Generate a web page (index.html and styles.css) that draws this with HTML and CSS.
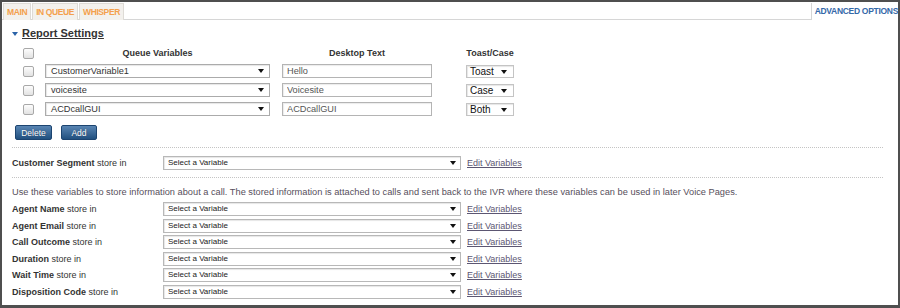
FILE: index.html
```html
<!DOCTYPE html>
<html>
<head>
    <title>Report Settings</title>
    <link rel="stylesheet" href="styles.css">
</head>
<body>
    <div class="panel">
        <div class="tabs">
            <span class="tab">MAIN</span>
            <span class="tab">IN QUEUE</span>
            <span class="tab">WHISPER</span>
            <span class="tab tab-adv">ADVANCED OPTIONS</span>
        </div>

        <div class="content">
            <h2 class="section-title"><span class="caret"></span><span class="title-text">Report Settings</span></h2>

            <div class="qtable">
                <span class="check"></span>
                <div class="qhead">Queue Variables</div>
                <div class="qhead c-text">Desktop Text</div>
                <div class="qhead c-toast">Toast/Case</div>

                <span class="check"></span>
                <div class="select qsel">CustomerVariable1</div>
                <input class="qinput c-text" type="text" value="Hello">
                <div class="select tsel c-toast">Toast</div>

                <span class="check"></span>
                <div class="select qsel">voicesite</div>
                <input class="qinput c-text" type="text" value="Voicesite">
                <div class="select tsel c-toast">Case</div>

                <span class="check"></span>
                <div class="select qsel">ACDcallGUI</div>
                <input class="qinput c-text" type="text" value="ACDcallGUI">
                <div class="select tsel c-toast">Both</div>
            </div>

            <div class="buttons">
                <button class="btn btn-delete">Delete</button>
                <button class="btn btn-add">Add</button>
            </div>

            <hr class="dots">

            <div class="store-row">
                <div class="store-label"><b>Customer Segment</b> store in</div>
                <div class="select vsel">Select a Variable</div>
                <a class="edit-link" href="#">Edit Variables</a>
            </div>

            <hr class="dots">

            <p class="desc">Use these variables to store information about a call. The stored information is attached to calls and sent back to the IVR where these variables can be used in later Voice Pages.</p>

            <div class="store-list">
                <div class="store-row">
                    <div class="store-label"><b>Agent Name</b> store in</div>
                    <div class="select vsel">Select a Variable</div>
                    <a class="edit-link" href="#">Edit Variables</a>
                </div>
                <div class="store-row">
                    <div class="store-label"><b>Agent Email</b> store in</div>
                    <div class="select vsel">Select a Variable</div>
                    <a class="edit-link" href="#">Edit Variables</a>
                </div>
                <div class="store-row">
                    <div class="store-label"><b>Call Outcome</b> store in</div>
                    <div class="select vsel">Select a Variable</div>
                    <a class="edit-link" href="#">Edit Variables</a>
                </div>
                <div class="store-row">
                    <div class="store-label"><b>Duration</b> store in</div>
                    <div class="select vsel">Select a Variable</div>
                    <a class="edit-link" href="#">Edit Variables</a>
                </div>
                <div class="store-row">
                    <div class="store-label"><b>Wait Time</b> store in</div>
                    <div class="select vsel">Select a Variable</div>
                    <a class="edit-link" href="#">Edit Variables</a>
                </div>
                <div class="store-row">
                    <div class="store-label"><b>Disposition Code</b> store in</div>
                    <div class="select vsel">Select a Variable</div>
                    <a class="edit-link" href="#">Edit Variables</a>
                </div>
            </div>
        </div>
    </div>
</body>
</html>
```

FILE: styles.css
```css
body {
    margin: 0;
    font-family: "Liberation Sans", Arial, sans-serif;
    color: #333;
    background: #fff;
}

.panel {
    width: 900px;
    height: 308px;
    box-sizing: border-box;
    border: 2px solid #4f4f4f;
    border-bottom-width: 3px;
    overflow: hidden;
}

/* tab strip */
.tabs {
    display: flex;
    height: 17px;
    border-bottom: 1px solid #d6d6d6;
}

.tab {
    margin: 1px 0 0 1px;
    padding: 0 3px;
    height: 16px;
    font-size: 8.5px;
    font-weight: bold;
    line-height: 16px;
    letter-spacing: -0.4px;
    color: #f4a04c;
    background: #f3f1ed;
    border: 1px solid #dedbd6;
    border-bottom: 0;
}

.tab-adv {
    margin-left: auto;
    margin-bottom: -1px;
    height: 17px;
    padding: 0 0 0 3px;
    font-size: 8.5px;
    letter-spacing: -0.3px;
    color: #3468a8;
    background: #fff;
    border-right: 0;
    border-top: 0;
    border-left-color: #d6d6d6;
}

.content {
    padding: 0 15px 0 10px;
}

.section-title {
    display: flex;
    align-items: center;
    gap: 4px;
    margin: 7px 0 0;
    font-size: 11px;
    line-height: 13px;
    font-weight: bold;
    color: #333;
}

.caret {
    width: 0;
    height: 0;
    border-left: 3.5px solid transparent;
    border-right: 3.5px solid transparent;
    border-top: 4px solid #2b63a8;
}

.title-text {
    text-decoration: underline;
}

/* queue variables table */
.qtable {
    display: grid;
    grid-template-columns: 23px 225px 162px 82px;
    grid-template-rows: 12px;
    grid-auto-rows: 14px;
    row-gap: 5px;
    align-items: center;
    margin: 7px 0 0 10px;
}

.check {
    width: 9px;
    height: 9px;
    margin-left: 1px;
    border: 1px solid #a8a8a8;
    border-radius: 2px;
    background: linear-gradient(#fdfdfd, #e2e2e2);
}

.qhead {
    font-size: 9px;
    font-weight: bold;
    text-align: center;
    white-space: nowrap;
    color: #333;
}

.c-text {
    margin-left: 12px;
    width: 150px;
}

.c-toast {
    margin-left: 34px;
    width: 48px;
}

.select {
    position: relative;
    box-sizing: border-box;
    height: 14px;
    line-height: 12px;
    padding-left: 5px;
    font-size: 9.2px;
    color: #333;
    background: #fff;
    border: 1px solid #ababab;
    box-shadow: inset 1px 1px 1px rgba(0, 0, 0, 0.1);
    white-space: nowrap;
}

.select::after {
    content: "";
    position: absolute;
    right: 5px;
    top: 4px;
    border-left: 3px solid transparent;
    border-right: 3px solid transparent;
    border-top: 4px solid #111;
}

.qsel {
    width: 225px;
}

.qinput {
    box-sizing: border-box;
    height: 14px;
    padding: 0 0 0 4px;
    font-family: "Liberation Sans", Arial, sans-serif;
    font-size: 9.2px;
    color: #555;
    border: 1px solid #b4b4b4;
    box-shadow: inset 1px 1px 1px rgba(0, 0, 0, 0.08);
    outline: none;
}

.tsel {
    height: 13px;
    align-self: end;
    padding-left: 3px;
    font-size: 10px;
    line-height: 11px;
    color: #111;
    border-color: #c4c4c4;
}

.tsel::after {
    right: 6px;
    top: 4px;
}

/* buttons */
.buttons {
    display: flex;
    gap: 9px;
    margin: 9px 0 0 3px;
}

.btn {
    height: 15px;
    padding: 0;
    font-family: "Liberation Sans", Arial, sans-serif;
    font-size: 8.5px;
    color: #fff;
    border: 1px solid #1c4470;
    border-radius: 2px;
    background: linear-gradient(#5985b3, #21507f);
    text-shadow: 0 0 1px rgba(0, 0, 0, 0.4);
}

.btn-delete {
    width: 37px;
}

.btn-add {
    width: 36px;
}

.dots {
    height: 0;
    margin: 7px 0 0;
    border: 0;
    border-top: 1px dotted #c4c4c4;
}

/* store-in rows */
.store-row {
    display: flex;
    align-items: center;
    height: 14px;
    margin-top: 8px;
    font-size: 9px;
}

.store-label {
    width: 151px;
    color: #333;
}

.vsel {
    width: 298px;
    padding-left: 4px;
    font-size: 8px;
    color: #222;
    border-color: #b8b8b8;
}

.vsel::after {
    right: 4px;
}

.edit-link {
    margin-left: 6px;
    color: #5c5672;
    text-decoration: underline;
}

.desc {
    margin: 8px 0 0;
    font-size: 9.25px;
    line-height: 12px;
    color: #574f5c;
    white-space: nowrap;
}

.store-list {
    display: grid;
    row-gap: 2.6px;
    margin-top: 4px;
}

.store-list .store-row {
    margin-top: 0;
}
```
